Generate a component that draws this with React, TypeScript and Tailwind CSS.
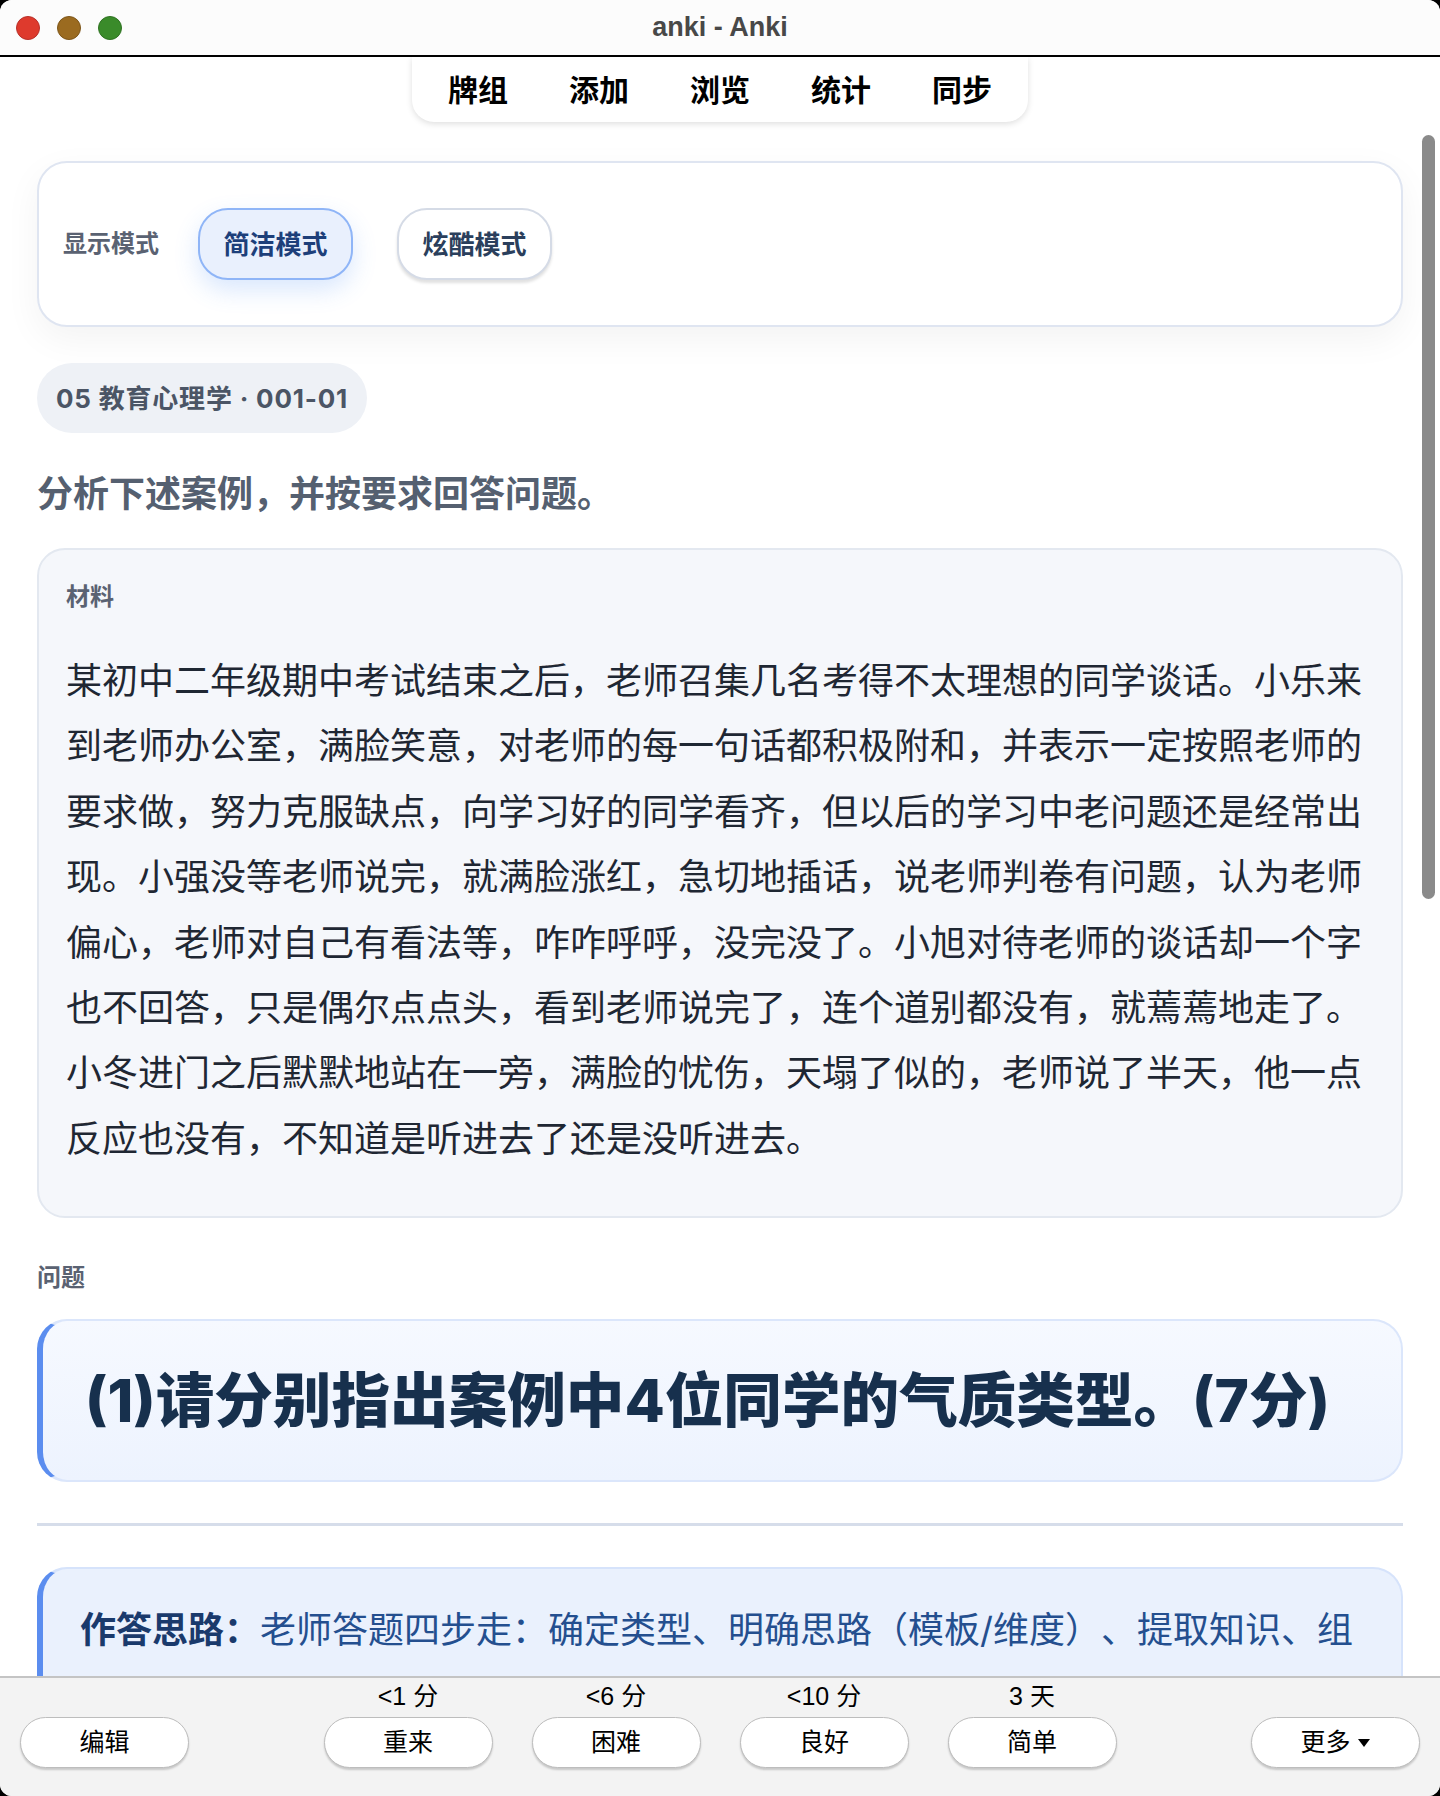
import React from "react";

const material =
  "某初中二年级期中考试结束之后，老师召集几名考得不太理想的同学谈话。小乐来到老师办公室，满脸笑意，对老师的每一句话都积极附和，并表示一定按照老师的要求做，努力克服缺点，向学习好的同学看齐，但以后的学习中老问题还是经常出现。小强没等老师说完，就满脸涨红，急切地插话，说老师判卷有问题，认为老师偏心，老师对自己有看法等，咋咋呼呼，没完没了。小旭对待老师的谈话却一个字也不回答，只是偶尔点点头，看到老师说完了，连个道别都没有，就蔫蔫地走了。小冬进门之后默默地站在一旁，满脸的忧伤，天塌了似的，老师说了半天，他一点反应也没有，不知道是听进去了还是没听进去。";

const navItems = ["牌组", "添加", "浏览", "统计", "同步"];

const ratings = [
  { due: "<1 分", label: "重来" },
  { due: "<6 分", label: "困难" },
  { due: "<10 分", label: "良好" },
  { due: "3 天", label: "简单" },
];

const BarButton: React.FC<{ children: React.ReactNode }> = ({ children }) => (
  <button className="w-[169px] h-[51px] rounded-[26px] bg-white border border-[#bdbdbd] shadow-[0_2px_2px_rgba(0,0,0,0.18)] text-[25px] text-black flex items-center justify-center">
    {children}
  </button>
);

export default function App() {
  return (
    <div className="w-[1440px] h-[1796px] bg-black [font-family:Inter,'Noto_Sans_CJK_SC',sans-serif]">
      <div className="h-full rounded-[12px] overflow-hidden bg-white flex flex-col">
        {/* title bar */}
        <div className="h-[55px] bg-[#fcfcfc] relative flex items-center justify-center shrink-0">
          <div className="absolute left-[16px] top-[16px] flex gap-[17px]">
            <span className="w-[24px] h-[24px] rounded-full bg-[#de3a2d] border border-[#b8302a]" />
            <span className="w-[24px] h-[24px] rounded-full bg-[#9b6b20] border border-[#7d561a]" />
            <span className="w-[24px] h-[24px] rounded-full bg-[#3a8b2a] border border-[#2f7222]" />
          </div>
          <span className="text-[27px] font-bold text-[#484848] [font-family:'Liberation_Sans',sans-serif]">
            anki - Anki
          </span>
        </div>
        <div className="h-[2px] bg-black shrink-0" />

        {/* review area */}
        <div className="flex-1 relative overflow-hidden bg-white">
          <nav className="mx-auto w-[616px] h-[65px] bg-white rounded-b-[22px] shadow-[0_2px_6px_rgba(0,0,0,0.13)] flex items-center justify-center gap-[61px]">
            {navItems.map((n) => (
              <span key={n} className="text-[30px] font-bold text-black leading-none">
                {n}
              </span>
            ))}
          </nav>

          <div className="px-[37px] flex flex-col">
            <div className="mt-[39px] h-[166px] rounded-[30px] border-2 border-[#dfe5f1] bg-white shadow-[0_12px_36px_rgba(0,0,0,0.05)] flex items-center px-[24px]">
              <span className="text-[24px] font-bold text-[#5a6272]">显示模式</span>
              <button className="ml-[39px] w-[155px] h-[72px] rounded-[30px] border-2 border-[#8fb5f7] bg-[#e9f0fd] shadow-[0_10px_24px_rgba(66,133,244,0.2)] text-[26px] font-bold text-[#1d3f7a]">
                简洁模式
              </button>
              <button className="ml-[44px] w-[155px] h-[72px] rounded-[30px] border-2 border-[#d5dbe6] bg-white shadow-[0_3px_3px_rgba(0,0,0,0.12)] text-[26px] font-bold text-[#2b3f5c]">
                炫酷模式
              </button>
            </div>

            <div className="mt-[36px] self-start h-[70px] px-[19px] rounded-full bg-[#eef1f6] flex items-center text-[26px] font-bold text-[#4b5565] tracking-[0.8px]">
              05 教育心理学 · 001-01
            </div>

            <h1 className="mt-[34px] text-[36px] leading-[54px] font-bold text-[#556070]">
              分析下述案例，并按要求回答问题。
            </h1>

            <div className="mt-[27px] rounded-[28px] border-2 border-[#e3e8f0] bg-[#f5f7fb] pt-[29px] px-[27px] pb-[47px]">
              <div className="text-[24px] leading-[36px] font-bold text-[#5a6272]">材料</div>
              <p className="mt-[31px] text-[36px] leading-[65.4px] text-[#1f2733] [font-family:'Noto_Sans_CJK_SC',sans-serif]">
                {material}
              </p>
            </div>

            <div className="mt-[42px] text-[24px] leading-[36px] font-bold text-[#5a6272]">问题</div>

            <div className="mt-[23px] rounded-[30px] border-2 border-l-[6px] border-[#dbe6fb] border-l-[#5b8def] bg-gradient-to-b from-[#f6f9ff] to-[#edf3fe] py-[39px] pl-[42px]">
              <div className="text-[58.6px] leading-[81px] font-extrabold text-[#17304d]">
                (1)请分别指出案例中4位同学的气质类型。(7分)
              </div>
            </div>

            <div className="mt-[41px] h-[3px] bg-[#d6ddea]" />

            <div className="mt-[41px] rounded-[30px] border-2 border-l-[6px] border-[#d6e3fb] border-l-[#5b8def] bg-[#eaf1fd] pt-[29px] pl-[37px] pr-[37px] h-[160px]">
              <div className="text-[36px] leading-[65px] text-[#244f8f] [text-spacing-trim:space-all]">
                <span className="font-bold text-[#1a3a6c]">作答思路：</span>
                老师答题四步走：确定类型、明确思路（模板/维度）、提取知识、组织答案
              </div>
            </div>
          </div>

          {/* overlay scrollbar */}
          <div className="absolute right-[5px] top-[78px] w-[13px] h-[764px] rounded-full bg-[#8a8a8a]" />
        </div>

        {/* answer bar */}
        <div className="h-[120px] shrink-0 border-t-2 border-[#c4c4c4] bg-[#f3f3f3] flex items-end justify-between px-[20px] pb-[28px] [font-family:'Liberation_Sans','Noto_Sans_CJK_SC',sans-serif]">
          <BarButton>编辑</BarButton>
          <div className="flex gap-[39px]">
            {ratings.map((r) => (
              <div key={r.label} className="flex flex-col items-center">
                <span className="text-[25px] leading-[30px] text-black mb-[6px]">{r.due}</span>
                <BarButton>{r.label}</BarButton>
              </div>
            ))}
          </div>
          <BarButton>
            <span className="flex items-center gap-[6px]">
              更多
              <svg width="14" height="10" viewBox="0 0 14 10">
                <polygon points="1,1 13,1 7,9" fill="#000" />
              </svg>
            </span>
          </BarButton>
        </div>
      </div>
    </div>
  );
}
